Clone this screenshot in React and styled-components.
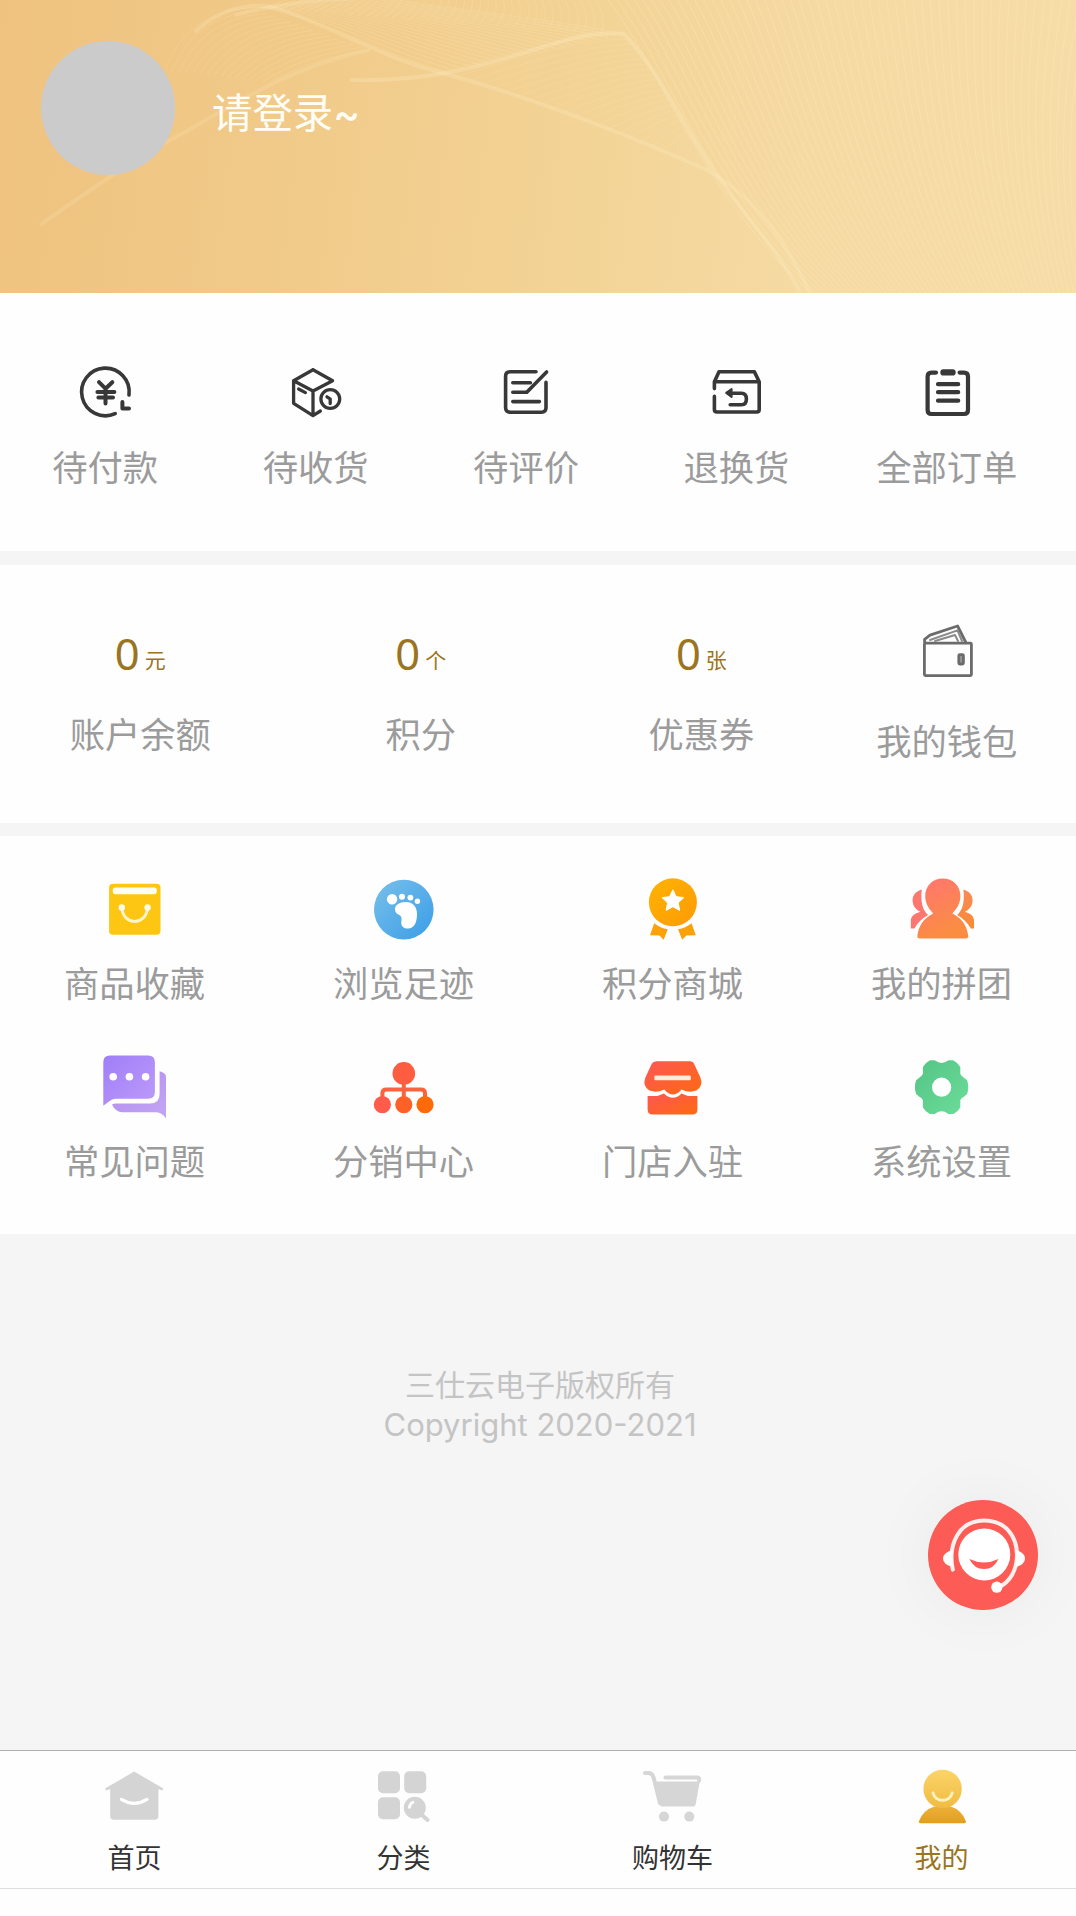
/**
 * @FileName : App.jsx
 * @description : 个人中心页面_订单,账户,功能入口,底部导航
 */

import React from "react";
import styled, { createGlobalStyle } from "styled-components";

const GlobalStyle = createGlobalStyle`
    *{
        box-sizing: border-box;
    }
    body{
        margin: 0;
        background-color: #f5f5f5;
        font-family: "Noto Sans CJK SC", "Noto Sans", sans-serif;
    }
    svg{
        display: block;
    }
`;

const MineContainer = styled.div`
    width: 1076px;
    height: 1916px;
    display: flex;
    flex-direction: column;
    overflow: hidden;
`;

const Header = styled.header`
    position: relative;
    flex: none;
    height: 293px;
    padding: 41px 41px 0;
    display: flex;
    align-items: flex-start;
    gap: 37px;
    background: linear-gradient(97deg, #efc27f 0%, #f1cb8a 30%, #f3d497 55%, #f5daa3 75%, #f6dca8 100%);
`;

const HeaderWave = styled.svg`
    position: absolute;
    inset: 0;
`;

const Avatar = styled.div`
    position: relative;
    width: 134px;
    height: 134px;
    border-radius: 50%;
    background-color: #cbcbcb;
`;

const LoginText = styled.div`
    position: relative;
    margin-top: 40px;
    font-size: 40.4px;
    line-height: 60px;
    color: #fffdf6;

    span{
        font-family: Inter, sans-serif;
        font-weight: 500;
    }
`;

const Panel = styled.section`
    flex: none;
    height: ${(props) => props.$height}px;
    margin-bottom: ${(props) => props.$gap || 0}px;
    background-color: #fefefe;
`;

const OrderRow = styled.div`
    display: grid;
    grid-template-columns: repeat(5, 1fr);
    padding: 67px 24px 0 0;
`;

const AccountRow = styled.div`
    display: grid;
    grid-template-columns: 4fr 4fr 4fr 3fr;
    padding: 54px 24px 0 0;
`;

const MenuGrid = styled.div`
    display: grid;
    grid-template-columns: repeat(4, 1fr);
    row-gap: 49px;
    padding-top: 41px;
`;

const Entry = styled.div`
    display: flex;
    flex-direction: column;
    align-items: center;
`;

const Label = styled.span`
    margin-top: ${(props) => props.$top ?? 16}px;
    height: 49px;
    font-size: 35.3px;
    line-height: 50px;
    color: #9b9b9b;
    white-space: nowrap;
`;

const Amount = styled.div`
    display: flex;
    align-items: baseline;
    gap: 5px;
    height: 64px;
    padding-top: 2px;
    line-height: 64px;
    color: #9a7420;

    strong{
        font-family: "Noto Sans", sans-serif;
        font-size: 43.5px;
        font-weight: 400;
    }
    small{
        font-size: 21px;
        transform: translateY(-2px);
    }
`;

const Copyright = styled.footer`
    margin-top: 128px;
    padding-left: 4px;
    display: flex;
    flex-direction: column;
    align-items: center;
    font-size: 30px;
    line-height: 42px;
    color: #c4c4c4;

    span + span{
        font-family: Inter, sans-serif;
        font-size: 31px;
    }
`;

const ServiceButton = styled.button`
    position: absolute;
    left: 928px;
    top: 1500px;
    width: 110px;
    height: 110px;
    padding: 0;
    border: 0;
    border-radius: 50%;
    background-color: #fd5b55;
    box-shadow: 0 0 70px rgba(0, 0, 0, 0.05);
`;

const TabBar = styled.nav`
    flex: none;
    margin-top: auto;
    height: 139px;
    padding-top: 13px;
    display: grid;
    grid-template-columns: repeat(4, 1fr);
    border-top: 1px solid #adb0ad;
    border-bottom: 1px solid #dedede;
    background-color: #fefefe;
`;

const TabLabel = styled.span`
    margin-top: 9px;
    font-size: 27px;
    line-height: 40px;
    color: ${(props) => (props.$active ? "#9a7420" : "#333")};
`;

const SafeArea = styled.div`
    flex: none;
    height: 27px;
    background-color: #fefefe;
`;

const LineSvg = styled.svg`
    fill: none;
    stroke: ${(props) => props.$color || "#383838"};
    stroke-width: ${(props) => props.$width || 3.6};
    stroke-linecap: round;
    stroke-linejoin: round;
`;

const LineIcon = ({ children, width, color }) => (
    <LineSvg width="64" height="64" viewBox="0 0 64 64" $width={width} $color={color}>{children}</LineSvg>
);

const FillIcon = ({ children }) => (
    <svg width="64" height="64" viewBox="0.6 0 64 64">{children}</svg>
);

// 渐变色_左上到右下
const Gradient = ({ id, from, to, x2 = 1, y2 = 1 }) => (
    <defs>
        <linearGradient id={id} x1="0" y1="0" x2={x2} y2={y2}>
            <stop offset="0" stopColor={from} />
            <stop offset="1" stopColor={to} />
        </linearGradient>
    </defs>
);

const PayIcon = () => (
    <LineIcon>
        <path d="M56 35A23.8 23.8 0 1 0 42.2 53.6" />
        <path d="M49.4 42V48.4H56" strokeWidth="4" />
        <path d="M26 22.2L32.5 28.7L39.3 22.2M32.5 28.7V43.5M24.4 31.9H41.4M25.4 37.6H40" strokeWidth="4" />
    </LineIcon>
);

const ReceiveIcon = () => (
    <LineIcon width={3.3}>
        <path d="M29 9.7L9.6 20.7V43.3L29 55.6L36.4 51M9.6 20.7L29 31L48.6 20.7L29 9.7M29 31V55" />
        <path d="M14.6 29L21.4 32.6" />
        <circle cx="46.3" cy="39" r="9.4" />
        <path d="M43 36.8L46.2 39V43.6" />
    </LineIcon>
);

const ReviewIcon = () => (
    <LineIcon>
        <path d="M42 11.8H16Q11.6 11.8 11.6 16.3V47.5Q11.6 52.2 16 52.2H47.5Q52 52.2 52 47.5V22.4" />
        <path d="M52.6 12L32.8 32.2H18.8M18.8 22.8H36.4M18.8 41.6H45.4" />
    </LineIcon>
);

const ReturnIcon = () => (
    <LineIcon>
        <path d="M10.4 28.6V21.7L15 11.8H50.4L55.2 21.7V49.5Q55.2 52 52.8 52H13Q10.4 52 10.4 49.5V36.4M10.4 21.7H55.2" />
        <path d="M27 33.2H37.4Q42.4 33.2 42.4 39T37.4 44.8H26.2" />
        <path d="M22.2 32.9L27.6 29V37Z" fill="#383838" strokeWidth="2" />
    </LineIcon>
);

const AllOrderIcon = () => (
    <LineIcon width={4.2}>
        <path d="M21 12.6H16.5Q12.6 12.6 12.6 16.5V50Q12.6 54 16.5 54H49Q53 54 53 50V16.5Q53 12.6 49 12.6H44.6" />
        <path d="M28.4 12.4H37.6" strokeWidth="6.2" />
        <path d="M23 24.2H43.2M23 32.2H43.2M23 40.7H43.2" />
    </LineIcon>
);

const WalletIcon = () => (
    <LineIcon width={2.8} color="#6b6b6b">
        <rect x="9.4" y="24.2" width="47" height="32.4" rx="1" />
        <path d="M9.6 23V20.4L15 16.2L42.6 7L50.6 23" />
        <path d="M15 21L42.5 11.4L47 22M20 22L40 16L43 22" strokeWidth="2" stroke="#8a8a8a" />
        <rect x="43.8" y="35.6" width="4.6" height="9.4" rx="1" fill="#999" />
    </LineIcon>
);

const FavoriteIcon = () => (
    <FillIcon>
        <rect x="6.7" y="6.7" width="51.4" height="51" rx="4" fill="#fdc612" />
        <rect x="10.4" y="10.6" width="44" height="6.6" rx="2.6" fill="#fffdf4" />
        <path d="M19.4 30.5C20.5 49 44 49 45.2 30.5" fill="none" stroke="#fff3c8" strokeWidth="3" />
        <circle cx="19.4" cy="30.5" r="3.2" fill="#fffbea" />
        <circle cx="45.2" cy="30.5" r="3.2" fill="#fffbea" />
    </FillIcon>
);

const FootprintIcon = () => (
    <FillIcon>
        <Gradient id="foot" from="#78c0eb" to="#3a9de6" />
        <circle cx="32.4" cy="32.6" r="29.8" fill="url(#foot)" />
        <g fill="#fff">
            <circle cx="20.7" cy="22.3" r="5.2" />
            <circle cx="30.6" cy="19.8" r="3" />
            <circle cx="39" cy="20.6" r="2.9" />
            <circle cx="46" cy="24.2" r="2.7" />
            <path d="M23.6 33C23 28 28 25 34.6 25C42 25 45.6 30 45.6 37C45.6 44 43.5 51.6 36.6 51.6C31 51.6 29.3 48 30 44C30.6 40 29.5 39 27 37.6C25 36.6 24 35.4 23.6 33Z" />
        </g>
    </FillIcon>
);

const MedalIcon = () => (
    <FillIcon>
        <Gradient id="medal" from="#ffb302" to="#fd9a06" />
        <circle cx="32.5" cy="25.3" r="24" fill="url(#medal)" />
        <path d="M32.5 12.8L35.8 19.7L43.4 20.6L37.8 25.8L39.3 33.4L32.5 29.7L25.7 33.4L27.2 25.8L21.6 20.6L29.2 19.7Z" fill="#fff" stroke="#fff" strokeLinejoin="round" />
        <path d="M13.8 46.2Q20 51 27.4 52.2L23.2 62.8L19 58.6L9.6 58.2Z" fill="#fba10a" />
        <path d="M51.2 46.2Q45 51 37.6 52.2L41.8 62.8L46 58.6L55.4 58.2Z" fill="#fba10a" />
    </FillIcon>
);

const GroupIcon = () => (
    <FillIcon>
        <Gradient id="group" from="#ff7572" to="#fb8d42" x2={0.4} />
        <Gradient id="groupR" from="#f98a55" to="#f98a35" x2={0} />
        <path d="M12.4 12.4C5 14.5 2.4 20 3.4 25.5C4 29.5 7 33 11 34.8C5.5 36.5 1.4 39 1.4 44V51.6H5C8 46 12.6 41.4 18.6 38C13.4 33 10.8 25 12.4 12.4Z" fill="#fb7770" />
        <path d="M54 12.4C61.4 14.5 64 20 63 25.5C62.4 29.5 59.4 33 55.4 34.8C60.9 36.5 64.6 39 64.6 44V51.6H61.4C58.4 46 53.8 41.4 47.8 38C53 33 55.6 25 54 12.4Z" fill="url(#groupR)" />
        <path d="M33.4 1.6C43.5 1.6 51 9 51 19C51 26.5 47.5 31.5 43 36.5C51.5 40.5 57.5 48 58.8 58.5Q59.2 61.4 56.2 61.4H10.6Q7.6 61.4 8 58.5C9.3 48 15.3 40.5 23.8 36.5C19.3 31.5 15.8 26.5 15.8 19C15.8 9 23.3 1.6 33.4 1.6Z" fill="url(#group)" />
    </FillIcon>
);

const QuestionIcon = () => (
    <FillIcon>
        <Gradient id="chat" from="#9f7ef9" to="#bd9bf8" />
        <Gradient id="chatBack" from="#b28bef" to="#c3a6f6" />
        <path d="M7.5 0.6H45.8Q52.5 0.6 52.5 7.3V37Q52.5 43.8 45.8 43.8H13Q9.5 43.8 6.6 46.4L0.9 50.8V7.3Q0.9 0.6 7.5 0.6Z" fill="url(#chat)" />
        <path d="M57.2 16.2Q63.6 17.6 63.6 22V63.4Q59.6 57.4 54 57.2H20Q13 57.2 9.6 49.6Q11.4 48.6 14 48.6H47.6Q57.2 48.6 57.2 39Z" fill="url(#chatBack)" />
        <circle cx="10.8" cy="21.8" r="3.8" fill="#fff" />
        <circle cx="27" cy="21.8" r="3.8" fill="#fff" />
        <circle cx="43.2" cy="21.8" r="3.8" fill="#fff" />
    </FillIcon>
);

const TeamIcon = () => (
    <FillIcon>
        <path d="M11 46V38Q11 34.4 15 34.4H49.6Q53.6 34.4 53.6 38V46M32.4 24V46" fill="none" stroke="#f9643e" strokeWidth="4" />
        <circle cx="32.4" cy="18.4" r="11.3" fill="#fe5d41" />
        <circle cx="11" cy="49.6" r="8.6" fill="#fe5b4b" />
        <circle cx="32.4" cy="49.6" r="8.6" fill="#fe6127" />
        <circle cx="53.6" cy="49.6" r="8.6" fill="#fd6a07" />
    </FillIcon>
);

const ShopIcon = () => (
    <FillIcon>
        <Gradient id="shop" from="#fe5656" to="#fd6a10" />
        <path d="M16.5 6.2H49.5Q52.6 6.2 54 9.4L60 22.5Q63.2 31 56 35.6Q48.5 38.4 41.2 34.4Q37 39.4 32.5 39.4T23.8 34.4Q16.5 38.4 9 35.6Q1.8 31 5 22.5L11 9.4Q13 6.2 16.5 6.2Z" fill="url(#shop)" />
        <path d="M7.2 41H17L23.6 38.4Q28 42.8 32.5 42.8T41 38.4L47.6 41H57V54.6Q57 59.6 52 59.6H12.2Q7.2 59.6 7.2 54.6Z" fill="url(#shop)" />
        <rect x="14" y="20.4" width="36.4" height="4.8" rx="1" fill="#ffeade" />
    </FillIcon>
);

const SettingIcon = () => (
    <FillIcon>
        <Gradient id="gear" from="#53c585" to="#6ddc9a" />
        <path
            d="M32.2 9.6Q36 9.6 39.6 6.8H43.4Q47.4 8.8 49.4 12.4V19.4Q50.4 22 53 23.4L56.4 26.2Q58.4 32.2 56.4 38.2L53 41Q50.4 42.4 49.4 45V52Q47.4 55.6 43.4 57.6H39.6Q36 54.8 32.2 54.8Q28.4 54.8 24.8 57.6H21Q17 55.6 15 52V45Q14 42.4 11.4 41L8 38.2Q6 32.2 8 26.2L11.4 23.4Q14 22 15 19.4V12.4Q17 8.8 21 6.8H24.8Q28.4 9.6 32.2 9.6Z"
            fill="url(#gear)" stroke="url(#gear)" strokeWidth="3" strokeLinejoin="round"
        />
        <circle cx="32.2" cy="32.2" r="9.6" fill="#fff" />
    </FillIcon>
);

const HomeIcon = () => (
    <FillIcon>
        <path d="M31.8 7.6L61 24.6L59.8 26.4L56 25V52Q56 55.8 52.2 55.8H11.6Q7.8 55.8 7.8 52V25L3.8 26.4L2.6 24.6Z" fill="#d4d4d4" />
        <path d="M19 35.4Q31.8 43.4 44.6 35.4" fill="none" stroke="#fff" strokeWidth="3.2" strokeLinecap="round" />
    </FillIcon>
);

const CategoryIcon = () => (
    <FillIcon>
        <g fill="#d4d4d4">
            <rect x="6.6" y="7.2" width="22" height="22" rx="5" />
            <rect x="32.8" y="7.2" width="22" height="22" rx="5" />
            <rect x="6.6" y="33.2" width="22" height="22" rx="5" />
            <circle cx="43.4" cy="43.8" r="11" />
        </g>
        <path d="M50 50.4L56.2 56" stroke="#d4d4d4" strokeWidth="4" strokeLinecap="round" />
        <path d="M38 43.4Q38.4 39.6 41.6 38.2" fill="none" stroke="#fff" strokeWidth="2.8" strokeLinecap="round" />
    </FillIcon>
);

const CartIcon = () => (
    <FillIcon>
        <path d="M4.6 9H7.5Q11.8 9 13.2 13.5L19.5 39M25 13.4H57Q59.4 13.4 58.6 16.6" fill="none" stroke="#d6d6d6" strokeWidth="4" strokeLinecap="round" />
        <path d="M15.8 17.4H59.4L55.4 39.4Q55 42.6 52 42.6H22.4Q19.6 42.6 19 39.8Z" fill="#d6d6d6" />
        <circle cx="23.6" cy="52.6" r="5" fill="#d6d6d6" />
        <circle cx="48.9" cy="52.6" r="5" fill="#d6d6d6" />
    </FillIcon>
);

const MineIcon = () => (
    <FillIcon>
        <Gradient id="mineHead" from="#fbd469" to="#f0bb42" x2={0} />
        <Gradient id="mineBody" from="#ecb03a" to="#e29f1c" x2={0} />
        <path d="M25 42.4H41.4Q52.6 46 56.6 57.4Q56.8 59.2 55 59.2H11Q9.2 59.2 9.4 57.4Q13.4 46 25 42.4Z" fill="url(#mineBody)" />
        <circle cx="33.2" cy="24.9" r="19.2" fill="url(#mineHead)" />
        <path d="M23.6 29C26 38.6 40.4 38.6 42.8 29" fill="none" stroke="#fff2bd" strokeWidth="3" strokeLinecap="round" />
    </FillIcon>
);

const ServiceIcon = () => (
    <svg width="110" height="110" viewBox="0 0 110 110">
        <circle cx="56.3" cy="54.4" r="26" fill="#fff" />
        <path d="M41.4 59Q56 66 70.4 59Q66 69 56 69T41.4 59Z" fill="#fd5b55" />
        <path d="M24.8 69.6C19.6 44 31 20.4 56.3 20.4C78 20.4 89 37 89 55C89 70 82 82 71 87" fill="none" stroke="#fff0ee" strokeWidth="4" strokeLinecap="round" />
        <path d="M24.6 50V67Q15 64.6 15 58.6T24.6 50ZM88 50V67Q97 64.6 97 58.6T88 50Z" fill="#fff" />
        <circle cx="68.8" cy="87.2" r="5.6" fill="#fff" />
    </svg>
);

// 两条三次曲线之间插值，生成一组细线
const meshLines = (a, b, count) =>
    Array.from({ length: count }, (_, i) => {
        const t = i / (count - 1);
        const p = a.map((v, k) => (v + (b[k] - v) * t).toFixed(1));
        return `M${p[0]} ${p[1]}C${p[2]} ${p[3]} ${p[4]} ${p[5]} ${p[6]} ${p[7]}`;
    }).join("");

const leftMesh = meshLines([165, 70, 180, 30, 210, 10, 250, 8], [270, 82, 300, 66, 330, 56, 370, 50], 16);
const foldMesh = meshLines([262, 8, 275, 4, 290, 0, 300, -8], [600, 34, 606, 24, 604, 10, 590, -8], 40);
const midMesh = meshLines([262, 8, 330, 20, 370, 50, 446, 72], [350, -8, 450, 10, 560, 20, 625, 34], 22);
const sideMesh = meshLines([446, 72, 520, 50, 580, 34, 625, 34], [707, 168, 706, 160, 705, 155, 703, 150], 24);
const rightMesh = meshLines([600, -10, 660, 60, 700, 200, 820, 300], [1090, -10, 1070, 90, 1060, 180, 1085, 300], 56);

const Wave = () => (
    <HeaderWave width="1076" height="293" viewBox="0 0 1076 293" fill="none" stroke="#fff0c8">
        <path d={leftMesh} strokeOpacity="0.14" />
        <path d={foldMesh} strokeOpacity="0.16" />
        <path d={midMesh} strokeOpacity="0.18" />
        <path d={sideMesh} strokeOpacity="0.12" />
        <path d={rightMesh} strokeOpacity="0.26" />
        <path d="M40 225C90 190 140 155 185 132C230 106 255 92 274 83C310 66 340 56 370 50" strokeOpacity="0.16" strokeWidth="4" />
        <path d="M195 32C225 4 262 0 290 13C350 36 390 60 446 74C540 100 640 140 707 170C760 200 790 250 810 293" strokeOpacity="0.22" strokeWidth="4" />
        <path d="M350 80C430 82 480 66 520 54C560 42 590 30 624 34C660 72 680 120 707 160C730 200 780 250 800 293" strokeOpacity="0.26" strokeWidth="4" />
        <path d="M235 15C290 0 330 0 360 -2" strokeOpacity="0.2" strokeWidth="4" />
    </HeaderWave>
);

const orders = [
    { name: "待付款", Icon: PayIcon },
    { name: "待收货", Icon: ReceiveIcon },
    { name: "待评价", Icon: ReviewIcon },
    { name: "退换货", Icon: ReturnIcon },
    { name: "全部订单", Icon: AllOrderIcon },
];

const accounts = [
    { name: "账户余额", value: 0, unit: "元" },
    { name: "积分", value: 0, unit: "个" },
    { name: "优惠券", value: 0, unit: "张" },
];

const menus = [
    { name: "商品收藏", Icon: FavoriteIcon },
    { name: "浏览足迹", Icon: FootprintIcon },
    { name: "积分商城", Icon: MedalIcon },
    { name: "我的拼团", Icon: GroupIcon },
    { name: "常见问题", Icon: QuestionIcon },
    { name: "分销中心", Icon: TeamIcon },
    { name: "门店入驻", Icon: ShopIcon },
    { name: "系统设置", Icon: SettingIcon },
];

const tabs = [
    { name: "首页", Icon: HomeIcon },
    { name: "分类", Icon: CategoryIcon },
    { name: "购物车", Icon: CartIcon },
    { name: "我的", Icon: MineIcon, active: true },
];

const App = () => {
    return (
        <MineContainer>
            <GlobalStyle />

            <Header>
                <Wave />
                <Avatar />
                <LoginText>请登录<span>~</span></LoginText>
            </Header>

            {/* 订单 */}
            <Panel $height={258} $gap={14}>
                <OrderRow>
                    {orders.map(({ name, Icon }) => (
                        <Entry key={name}>
                            <Icon />
                            <Label $top={17}>{name}</Label>
                        </Entry>
                    ))}
                </OrderRow>
            </Panel>

            {/* 账户 */}
            <Panel $height={258} $gap={13}>
                <AccountRow>
                    {accounts.map(({ name, value, unit }) => (
                        <Entry key={name}>
                            <Amount>
                                <strong>{value}</strong>
                                <small>{unit}</small>
                            </Amount>
                            <Label $top={25}>{name}</Label>
                        </Entry>
                    ))}
                    <Entry>
                        <WalletIcon />
                        <Label $top={32}>我的钱包</Label>
                    </Entry>
                </AccountRow>
            </Panel>

            {/* 功能入口 */}
            <Panel $height={398}>
                <MenuGrid>
                    {menus.map(({ name, Icon }) => (
                        <Entry key={name}>
                            <Icon />
                            <Label>{name}</Label>
                        </Entry>
                    ))}
                </MenuGrid>
            </Panel>

            <Copyright>
                <span>三仕云电子版权所有</span>
                <span>Copyright 2020-2021</span>
            </Copyright>

            <ServiceButton aria-label="客服">
                <ServiceIcon />
            </ServiceButton>

            <TabBar>
                {tabs.map(({ name, Icon, active }) => (
                    <Entry key={name}>
                        <Icon />
                        <TabLabel $active={active}>{name}</TabLabel>
                    </Entry>
                ))}
            </TabBar>
            <SafeArea />
        </MineContainer>
    );
};
export default App;
